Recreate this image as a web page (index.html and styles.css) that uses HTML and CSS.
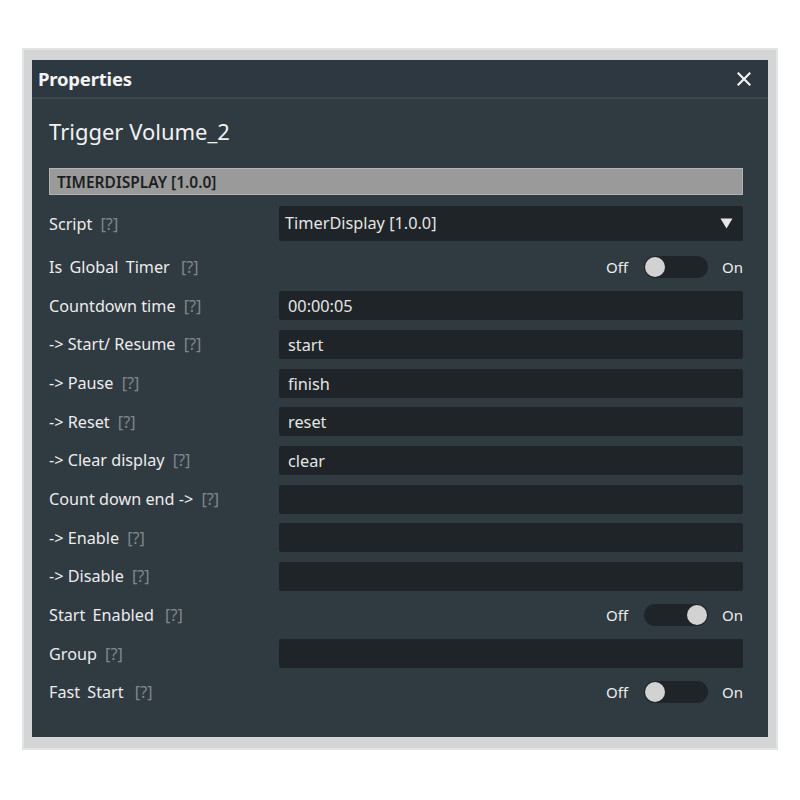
FILE: index.html
```html
<!DOCTYPE html>
<html>
<head>
<meta charset="utf-8">
<link rel="stylesheet" href="styles.css">
</head>
<body>
<div class="frame">
  <div class="panel">
    <div class="header">
      <span class="header-title">Properties</span>
      <svg class="close" width="14" height="14" viewBox="0 0 14 14"><path d="M1.5 1.5 L12.5 12.5 M12.5 1.5 L1.5 12.5" stroke="#f2f2f2" stroke-width="2.2" stroke-linecap="square"/></svg>
    </div>
    <div class="body">
      <div class="obj-title">Trigger Volume_2</div>
      <div class="section">TIMERDISPLAY [1.0.0]</div>
      <div class="rows">
        <div class="row row-script">
          <div class="label">Script <span class="help">[?]</span></div>
          <div class="select">TimerDisplay [1.0.0]<svg class="arrow" width="13" height="11" viewBox="0 0 13 11"><path d="M0.5 0.5 H12.5 L6.5 10.5 Z" fill="#e6e6e6"/></svg></div>
        </div>
        <div class="row">
          <div class="label wide">Is Global Timer <span class="help">[?]</span></div>
          <div class="toggle-wrap"><span class="tg-text">Off</span><span class="track"><span class="knob"></span></span><span class="tg-text">On</span></div>
        </div>
        <div class="row">
          <div class="label">Countdown time <span class="help">[?]</span></div>
          <div class="input">00:00:05</div>
        </div>
        <div class="row">
          <div class="label">-&gt; Start/ Resume <span class="help">[?]</span></div>
          <div class="input">start</div>
        </div>
        <div class="row">
          <div class="label">-&gt; Pause <span class="help">[?]</span></div>
          <div class="input">finish</div>
        </div>
        <div class="row">
          <div class="label">-&gt; Reset <span class="help">[?]</span></div>
          <div class="input">reset</div>
        </div>
        <div class="row">
          <div class="label">-&gt; Clear display <span class="help">[?]</span></div>
          <div class="input">clear</div>
        </div>
        <div class="row">
          <div class="label">Count down end -&gt; <span class="help">[?]</span></div>
          <div class="input"></div>
        </div>
        <div class="row">
          <div class="label">-&gt; Enable <span class="help">[?]</span></div>
          <div class="input"></div>
        </div>
        <div class="row">
          <div class="label">-&gt; Disable <span class="help">[?]</span></div>
          <div class="input"></div>
        </div>
        <div class="row">
          <div class="label wide">Start Enabled <span class="help">[?]</span></div>
          <div class="toggle-wrap"><span class="tg-text">Off</span><span class="track on"><span class="knob"></span></span><span class="tg-text">On</span></div>
        </div>
        <div class="row">
          <div class="label">Group <span class="help">[?]</span></div>
          <div class="input"></div>
        </div>
        <div class="row">
          <div class="label wide">Fast Start <span class="help">[?]</span></div>
          <div class="toggle-wrap"><span class="tg-text">Off</span><span class="track"><span class="knob"></span></span><span class="tg-text">On</span></div>
        </div>
      </div>
    </div>
  </div>
</div>
</body>
</html>
```
FILE: styles.css
```css
* { box-sizing: border-box; }
html, body { margin: 0; padding: 0; background: #ffffff; }
body {
  padding: 48px 22px 0 22px;
  font-family: "Noto Sans", "DejaVu Sans", sans-serif;
}
.frame {
  width: 756px;
  background: #d3d5d6;
  padding: 12px 10px 13px 10px;
  box-shadow: inset 0 0 0 2px #e2e4e4;
}
.panel {
  background: #303a41;
}
.header {
  height: 37px;
  background: #2d3840;
  border-bottom: 2px solid #3a454c;
  display: flex;
  align-items: center;
  justify-content: space-between;
  padding: 0 17px 0 6px;
  box-sizing: content-box;
}
.header-title {
  color: #f4f4f4;
  font-weight: 700;
  font-size: 18.5px;
  letter-spacing: -0.2px;
}
.close { display: block; margin-top: 1px; }
.body {
  padding: 17px 25px 30px 17px;
}
.obj-title {
  color: #f2f2f2;
  font-size: 22px;
  line-height: 30px;
  margin-bottom: 22px;
}
.section {
  height: 27px;
  background: #9a9a9a;
  border: 1px solid #b4b4b4;
  color: #1c1f21;
  font-size: 15.5px;
  font-weight: 600;
  line-height: 26px;
  padding-left: 7px;
  margin-bottom: 11px;
}
.rows {
  display: flex;
  flex-direction: column;
  gap: 9.67px;
}
.row {
  display: grid;
  grid-template-columns: 230px 1fr;
  align-items: center;
  height: 29px;
}
.row-script { height: 35px; margin-bottom: 2px; }
.label {
  color: #ececec;
  font-size: 16.2px;
  white-space: nowrap;
}
.label.wide { word-spacing: 3px; }
.help { color: #80888c; margin-left: 4px; }
.input, .select {
  background: #1e2428;
  height: 29px;
  border-radius: 2px;
  color: #e4e4e4;
  font-size: 16.3px;
  line-height: 31px;
  padding-left: 9px;
}
.select {
  height: 35px;
  line-height: 35px;
  padding-left: 6px;
  display: flex;
  justify-content: space-between;
  align-items: center;
  padding-right: 10px;
}
.arrow { display: block; }
.toggle-wrap {
  display: flex;
  justify-content: flex-end;
  align-items: center;
}
.tg-text {
  color: #ececec;
  font-size: 15px;
}
.track {
  width: 64px;
  height: 22px;
  background: #1e2428;
  border-radius: 11px;
  margin: 0 14px 0 16px;
  position: relative;
}
.knob {
  position: absolute;
  top: 1px;
  left: 1px;
  width: 20px;
  height: 20px;
  border-radius: 50%;
  background: #d2d2d2;
}
.track.on .knob { left: 43px; }
```
